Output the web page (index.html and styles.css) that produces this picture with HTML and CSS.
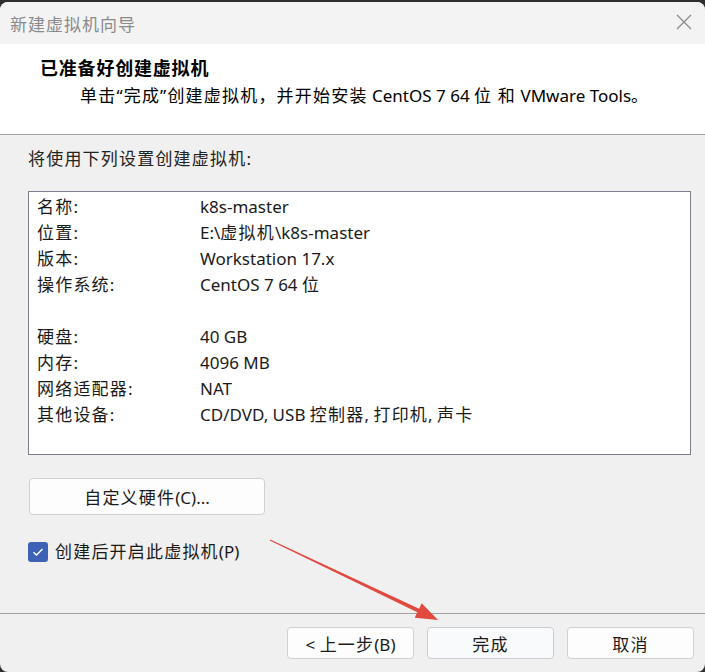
FILE: index.html
```html
<!DOCTYPE html>
<html lang="zh-CN">
<head>
    <meta charset="UTF-8">
    <title>新建虚拟机向导</title>
    <link rel="stylesheet" href="styles.css">
</head>
<body>
<div class="window">
    <!-- Title bar -->
    <div class="titlebar">
        <span class="title cjk">新建虚拟机向导</span>
        <svg class="close" width="16" height="16" viewBox="0 0 16 16">
            <path d="M1 1 L15 15 M15 1 L1 15" stroke="#8a8a8a" stroke-width="1.3" fill="none"/>
        </svg>
    </div>

    <!-- Header -->
    <div class="header">
        <h1 class="cjk">已准备好创建虚拟机</h1>
        <p><span class="cjk">单击“完成”创建虚拟机，并开始安装</span> CentOS 7 64 <span class="cjk">位 和</span> VMware Tools<span class="cjk">。</span></p>
    </div>

    <!-- Content -->
    <div class="content">
        <p class="intro cjk">将使用下列设置创建虚拟机:</p>
        <div class="summary">
            <div class="row"><span class="label cjk">名称:</span><span>k8s-master</span></div>
            <div class="row"><span class="label cjk">位置:</span><span>E:\<span class="cjk">虚拟机</span>\k8s-master</span></div>
            <div class="row"><span class="label cjk">版本:</span><span>Workstation 17.x</span></div>
            <div class="row"><span class="label cjk">操作系统:</span><span>CentOS 7 64 <span class="cjk">位</span></span></div>
            <div class="row"></div>
            <div class="row"><span class="label cjk">硬盘:</span><span>40 GB</span></div>
            <div class="row"><span class="label cjk">内存:</span><span>4096 MB</span></div>
            <div class="row"><span class="label cjk">网络适配器:</span><span>NAT</span></div>
            <div class="row"><span class="label cjk">其他设备:</span><span>CD/DVD, USB <span class="cjk">控制器</span>, <span class="cjk">打印机</span>, <span class="cjk">声卡</span></span></div>
        </div>
        <button class="btn custom"><span class="cjk">自定义硬件</span>(C)...</button>
        <label class="check">
            <span class="box">
                <svg width="12" height="10" viewBox="0 0 12 10">
                    <path d="M1.5 5.2 L4.5 8 L10.5 2" stroke="#fff" stroke-width="1.4" fill="none"/>
                </svg>
            </span>
            <span><span class="cjk">创建后开启此虚拟机</span>(P)</span>
        </label>
    </div>

    <!-- Footer -->
    <div class="footer">
        <button class="btn">&lt; <span class="cjk">上一步</span>(B)</button>
        <button class="btn primary cjk">完成</button>
        <button class="btn cjk">取消</button>
    </div>

    <!-- annotation arrow -->
    <svg class="arrow" width="705" height="672" viewBox="0 0 705 672">
        <polygon points="270.2,539.4 419.1,608.7 421.7,603.3 438,620 414.7,617.7 417.3,612.3 269.8,540.6" fill="#e04a3f"/>
    </svg>
</div>
</body>
</html>
```

FILE: styles.css
```css
body {
    margin: 0;
    background: #2e2e2e;
    font-family: "Noto Sans", "Noto Sans CJK SC", sans-serif;
    color: #1a1a1a;
    overflow: hidden;
}

/* chinese runs are a bit wider in the original */
.cjk {
    letter-spacing: 1.2px;
}

.window {
    position: relative;
    margin-top: 2px;
    height: 670px;
    background: #f0f0f0;
    border-radius: 8px;
    overflow: hidden;
}

/* Title bar */
.titlebar {
    height: 42px;
    background: #f3f3f3;
    display: flex;
    align-items: center;
    justify-content: space-between;
    padding: 0 13px 0 10px;
}
.titlebar .title {
    font-size: 17px;
    color: #8a8a8a;
    font-family: "Noto Sans CJK SC", sans-serif;
    letter-spacing: 1px;
}
.titlebar .close {
    margin-top: -2px;
}

/* Header */
.header {
    background: #fff;
    border-bottom: 1px solid #a0a0a0;
    box-sizing: border-box;
    height: 91px;
    padding-top: 12px;
}
.header h1 {
    margin: 0 0 0 40px;
    font-size: 18px;
    line-height: 22px;
    font-weight: 700;
    font-family: "Noto Sans CJK SC", sans-serif;
    color: #000;
    letter-spacing: 0.8px;
}
.header p {
    margin: 8px 0 0 80px;
    font-size: 17px;
    line-height: 20px;
    color: #000;
}

/* Content */
.content {
    height: 478px;
    border-bottom: 1px solid #a0a0a0;
    padding-left: 28px;
    display: flex;
    flex-direction: column;
    align-items: flex-start;
}
.intro {
    margin: 14px 0 0;
    font-size: 17px;
    line-height: 20px;
    color: #222;
}
.summary {
    margin-top: 22px;
    width: 663px;
    height: 264px;
    box-sizing: border-box;
    background: #fff;
    border: 1px solid #7c8088;
    padding: 2px 0 0 8px;
}
.row {
    display: flex;
    height: 26px;
    line-height: 26px;
    font-size: 17px;
}
.row .label {
    width: 163px;
    flex-shrink: 0;
}

.btn {
    font-family: "Noto Sans", "Noto Sans CJK SC", sans-serif;
    font-size: 17px;
    color: #1a1a1a;
    background: #fdfdfd;
    border: 1px solid #d0d0d0;
    border-radius: 4px;
    width: 127px;
    height: 32px;
    padding: 0;
}
.btn.custom {
    margin: 23px 0 0 1px;
    width: 236px;
    height: 37px;
}
.btn.primary {
    background: #f9fafc;
    border-color: #c9ccd3;
}

.check {
    margin-top: 27px;
    display: flex;
    align-items: center;
    gap: 7px;
    font-size: 17px;
    line-height: 20px;
}
.check .box {
    width: 20px;
    height: 20px;
    border-radius: 3px;
    background: #3d62b5;
    display: flex;
    align-items: center;
    justify-content: center;
}

/* Footer */
.footer {
    display: flex;
    justify-content: flex-end;
    gap: 13px;
    padding: 13px 11px 0 0;
}

.arrow {
    position: absolute;
    left: 0;
    top: -2px;
    pointer-events: none;
}
```
